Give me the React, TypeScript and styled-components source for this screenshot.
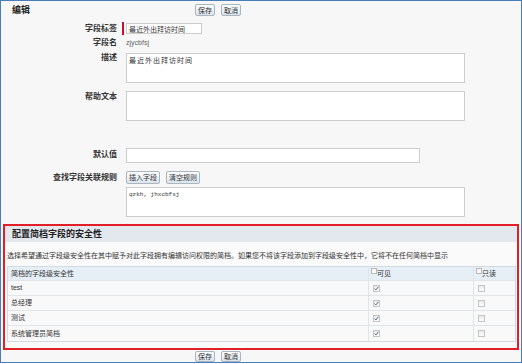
import React from "react";
import styled, { createGlobalStyle } from "styled-components";

const GlobalStyle = createGlobalStyle`
  body {
    margin: 0;
    background: #ffffff;
    font-family: "Liberation Sans", "Noto Sans CJK SC", sans-serif;
  }
`;

const CJK = `"Liberation Sans", "Noto Sans CJK SC", sans-serif`;

const Frame = styled.div`
  width: 522px;
  height: 363px;
  box-sizing: border-box;
  border: 1px solid #4a7ebb;
  background: #f7f7f7;
  display: flex;
  flex-direction: column;
  font-family: ${CJK};
  color: #333;
`;

const TopBar = styled.div`
  display: grid;
  grid-template-columns: 121px 1fr;
  height: 21px;
  box-sizing: border-box;
  padding-top: 3px;
`;

const PageTitle = styled.h2`
  margin: 0;
  padding-left: 11px;
  font-size: 9px;
  line-height: 13px;
  font-weight: 700;
  color: #222;
`;

const ButtonGroup = styled.div<{ $indent: number }>`
  display: flex;
  gap: 6px;
  padding-left: ${(p) => p.$indent}px;
  align-items: flex-start;
`;

const Button = styled.button<{ $h?: number }>`
  height: ${(p) => p.$h ?? 12}px;
  padding: 0 2px;
  margin: 0;
  border: 1px solid #aab5bf;
  border-radius: 2px;
  background: linear-gradient(#fbfdff, #dbe4ec);
  font-family: ${CJK};
  font-size: 7px;
  line-height: 1;
  color: #333;
  cursor: pointer;
`;

const FormRow = styled.div<{ $top: number; $h: number }>`
  display: grid;
  grid-template-columns: 121px 1fr;
  margin-top: ${(p) => p.$top}px;
  height: ${(p) => p.$h}px;
`;

const Label = styled.label<{ $lh: number }>`
  text-align: right;
  padding-right: 5px;
  font-size: 8px;
  font-weight: 700;
  line-height: ${(p) => p.$lh}px;
  color: #333;
  white-space: nowrap;
`;

const Field = styled.div<{ $required?: boolean }>`
  display: flex;
  align-items: center;
  gap: 6px;
  padding-left: ${(p) => (p.$required ? 2 : 4)}px;
  border-left: ${(p) => (p.$required ? "2px solid #c8102e" : "none")};
`;

const TextInput = styled.input<{ $w: number; $h: number }>`
  width: ${(p) => p.$w}px;
  height: ${(p) => p.$h}px;
  box-sizing: border-box;
  margin: 0;
  padding: 0 2px;
  border: 1px solid #cdcdcd;
  background: #fff;
  font-family: ${CJK};
  font-size: 7px;
  color: #333;
  outline: none;
`;

const TextArea = styled.textarea<{ $mono?: boolean }>`
  width: 339px;
  height: 30px;
  box-sizing: border-box;
  margin: 0;
  padding: 2px 2px;
  border: 1px solid #cdcdcd;
  background: #fff;
  resize: none;
  overflow: hidden;
  outline: none;
  font-family: ${(p) => (p.$mono ? `"Liberation Mono", monospace` : CJK)};
  font-size: ${(p) => (p.$mono ? 6 : 7)}px;
  letter-spacing: ${(p) => (p.$mono ? 0 : 1)}px;
  line-height: 9px;
  color: #333;
`;

const PlainValue = styled.span`
  font-family: "Liberation Sans", sans-serif;
  font-size: 7px;
  color: #666;
  line-height: 12px;
`;

const SecurityBox = styled.section`
  margin: 7px 2px 0;
  height: 126px;
  box-sizing: border-box;
  border: 2px solid #e41e26;
  display: flex;
  flex-direction: column;
  background: #fafafa;
`;

const SectionHeader = styled.h3`
  margin: 0;
  height: 16px;
  padding-left: 7px;
  background: #e3e7ee;
  font-size: 9px;
  font-weight: 700;
  line-height: 16px;
  color: #222;
`;

const SectionNote = styled.p`
  margin: 0;
  height: 24px;
  box-sizing: border-box;
  padding: 9px 0 0 2px;
  font-size: 7px;
  line-height: 10px;
  white-space: nowrap;
  color: #333;
`;

const Table = styled.div`
  margin: 0 1px 0 2px;
  border: 1px solid #d3dbe2;
  display: grid;
  grid-template-columns: 360px 105px 1fr;
  background: #f9f9f9;
`;

const Cell = styled.div<{ $head?: boolean; $divider?: boolean; $pad: number }>`
  height: ${(p) => (p.$head ? 14 : 15)}px;
  box-sizing: border-box;
  display: flex;
  align-items: ${(p) => (p.$head ? "flex-start" : "center")};
  padding-left: ${(p) => p.$pad}px;
  background: ${(p) => (p.$head ? "#e6eff6" : "transparent")};
  border-bottom: 1px solid #e0e5ea;
  border-left: ${(p) => (p.$divider ? "1px solid #e0e5ea" : "none")};
  font-size: 7px;
  line-height: ${(p) => (p.$head ? 14 : 14)}px;
  color: #333;
  &:nth-last-child(-n + 3) {
    border-bottom: none;
  }
`;

const HeadBox = styled.span`
  width: 6px;
  height: 6px;
  margin-top: 1px;
  box-sizing: border-box;
  border: 1px solid #b9b9b9;
  background: linear-gradient(#f2f2f2, #ffffff);
`;

const CheckBox = styled.span`
  width: 7px;
  height: 7px;
  box-sizing: border-box;
  border: 1px solid #c4c4c4;
  background: linear-gradient(#e9e9e9, #ffffff);
  display: flex;
  align-items: center;
  justify-content: center;
`;

const BottomBar = styled.div`
  margin-top: 1px;
  display: flex;
  gap: 6px;
  padding-left: 194px;
`;

const Tick = () => (
  <svg width="5" height="5" viewBox="0 0 5 5">
    <path d="M0.6 2.6 L1.9 4 L4.4 0.8" fill="none" stroke="#4a5a6a" strokeWidth="0.9" />
  </svg>
);

const profiles = ["test", "总经理", "测试", "系统管理员简档"];

export default function App() {
  return (
    <>
      <GlobalStyle />
      <Frame>
        <TopBar>
          <PageTitle>编辑</PageTitle>
          <ButtonGroup $indent={73}>
            <Button>保存</Button>
            <Button>取消</Button>
          </ButtonGroup>
        </TopBar>

        <FormRow $top={0} $h={13}>
          <Label $lh={13}>字段标签</Label>
          <Field $required>
            <TextInput $w={76} $h={11} defaultValue="最近外出拜访时间" readOnly />
          </Field>
        </FormRow>

        <FormRow $top={2} $h={12}>
          <Label $lh={12}>字段名</Label>
          <Field>
            <PlainValue>zjycbfsj</PlainValue>
          </Field>
        </FormRow>

        <FormRow $top={4} $h={30}>
          <Label $lh={10}>描述</Label>
          <Field>
            <TextArea defaultValue="最近外出拜访时间" readOnly />
          </Field>
        </FormRow>

        <FormRow $top={8} $h={30}>
          <Label $lh={12}>帮助文本</Label>
          <Field>
            <TextArea readOnly />
          </Field>
        </FormRow>

        <FormRow $top={27} $h={15}>
          <Label $lh={14}>默认值</Label>
          <Field>
            <TextInput $w={294} $h={15} readOnly />
          </Field>
        </FormRow>

        <FormRow $top={8} $h={13}>
          <Label $lh={13}>查找字段关联规则</Label>
          <Field>
            <Button $h={13}>插入字段</Button>
            <Button $h={13}>清空规则</Button>
          </Field>
        </FormRow>

        <FormRow $top={3} $h={30}>
          <span />
          <Field>
            <TextArea $mono defaultValue="qzkh, jhxcbfsj" readOnly />
          </Field>
        </FormRow>

        <SecurityBox>
          <SectionHeader>配置简档字段的安全性</SectionHeader>
          <SectionNote>
            选择希望通过字段级安全性在其中赋予对此字段拥有编辑访问权限的简档。如果您不将该字段添加到字段级安全性中，它将不在任何简档中显示
          </SectionNote>
          <Table>
            <Cell $head $pad={3}>简档的字段级安全性</Cell>
            <Cell $head $divider $pad={2}>
              <HeadBox />
              可见
            </Cell>
            <Cell $head $divider $pad={2}>
              <HeadBox />
              只读
            </Cell>
            {profiles.map((name) => (
              <React.Fragment key={name}>
                <Cell $pad={3}>{name}</Cell>
                <Cell $divider $pad={4}>
                  <CheckBox>
                    <Tick />
                  </CheckBox>
                </Cell>
                <Cell $divider $pad={4}>
                  <CheckBox />
                </Cell>
              </React.Fragment>
            ))}
          </Table>
        </SecurityBox>

        <BottomBar>
          <Button $h={11}>保存</Button>
          <Button $h={11}>取消</Button>
        </BottomBar>
      </Frame>
    </>
  );
}
